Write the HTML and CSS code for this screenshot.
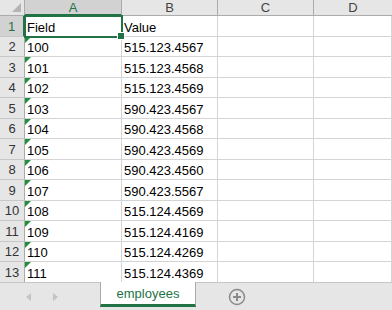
FILE: index.html
```html
<!DOCTYPE html>
<html lang="en">

<head>
    <meta charset="UTF-8">
    <title>employees</title>
    <link rel="stylesheet" href="styles.css">
</head>

<body>
    <div class="sheet">
        <div class="grid">
            <div class="corner"></div>
            <div class="col-head active">A</div>
            <div class="col-head">B</div>
            <div class="col-head">C</div>
            <div class="col-head last">D</div>

            <div class="row-head active">1</div>
            <div class="cell selected">Field</div>
            <div class="cell">Value</div>
            <div class="cell"></div>
            <div class="cell"></div>

            <div class="row-head">2</div>
            <div class="cell txt">100</div>
            <div class="cell">515.123.4567</div>
            <div class="cell"></div>
            <div class="cell"></div>

            <div class="row-head">3</div>
            <div class="cell txt">101</div>
            <div class="cell">515.123.4568</div>
            <div class="cell"></div>
            <div class="cell"></div>

            <div class="row-head">4</div>
            <div class="cell txt">102</div>
            <div class="cell">515.123.4569</div>
            <div class="cell"></div>
            <div class="cell"></div>

            <div class="row-head">5</div>
            <div class="cell txt">103</div>
            <div class="cell">590.423.4567</div>
            <div class="cell"></div>
            <div class="cell"></div>

            <div class="row-head">6</div>
            <div class="cell txt">104</div>
            <div class="cell">590.423.4568</div>
            <div class="cell"></div>
            <div class="cell"></div>

            <div class="row-head">7</div>
            <div class="cell txt">105</div>
            <div class="cell">590.423.4569</div>
            <div class="cell"></div>
            <div class="cell"></div>

            <div class="row-head">8</div>
            <div class="cell txt">106</div>
            <div class="cell">590.423.4560</div>
            <div class="cell"></div>
            <div class="cell"></div>

            <div class="row-head">9</div>
            <div class="cell txt">107</div>
            <div class="cell">590.423.5567</div>
            <div class="cell"></div>
            <div class="cell"></div>

            <div class="row-head">10</div>
            <div class="cell txt">108</div>
            <div class="cell">515.124.4569</div>
            <div class="cell"></div>
            <div class="cell"></div>

            <div class="row-head">11</div>
            <div class="cell txt">109</div>
            <div class="cell">515.124.4169</div>
            <div class="cell"></div>
            <div class="cell"></div>

            <div class="row-head">12</div>
            <div class="cell txt">110</div>
            <div class="cell">515.124.4269</div>
            <div class="cell"></div>
            <div class="cell"></div>

            <div class="row-head">13</div>
            <div class="cell txt">111</div>
            <div class="cell">515.124.4369</div>
            <div class="cell"></div>
            <div class="cell"></div>

            <!-- row 14, only its top edge shows above the tab bar -->
            <div class="row-head"></div>
            <div class="cell txt"></div>
            <div class="cell"></div>
            <div class="cell"></div>
            <div class="cell"></div>
        </div>

        <div class="tabs">
            <div class="nav">
                <span class="arrow left"></span>
                <span class="arrow right"></span>
            </div>
            <div class="tab">employees</div>
            <div class="add">
                <svg width="18" height="18" viewBox="0 0 18 18">
                    <circle cx="9" cy="9" r="7.5" fill="none" stroke="#8a8a8a" stroke-width="1.5" />
                    <path d="M9 5v8M5 9h8" stroke="#8a8a8a" stroke-width="2" />
                </svg>
            </div>
        </div>
    </div>
</body>

</html>
```

FILE: styles.css
```css
:root {
    --green: #217346;
    --grid: #d4d4d4;
    --head-bg: #e6e6e6;
    --head-line: #ababab;
}

* {
    margin: 0;
    padding: 0;
    box-sizing: border-box;
}

body {
    background: #fff;
    font-family: 'Liberation Sans', Arial, sans-serif;
    font-size: 13px;
    color: #000;
}

.sheet {
    width: 392px;
    height: 310px;
    display: flex;
    flex-direction: column;
    overflow: hidden;
}

.grid {
    display: grid;
    grid-template-columns: 25px 97px 96px 96px 1fr;
    grid-template-rows: 16px repeat(14, 20.5px);
    flex: 1;
    overflow: hidden;
}

.corner {
    background: var(--head-bg);
    border-right: 1px solid var(--head-line);
    border-bottom: 1px solid var(--head-line);
    position: relative;
}

.corner::after {
    content: '';
    position: absolute;
    right: 3px;
    bottom: 3px;
    border-left: 9px solid transparent;
    border-bottom: 9px solid #b4b4b4;
}

.col-head {
    background: var(--head-bg);
    border-right: 1px solid var(--head-line);
    border-bottom: 1px solid var(--head-line);
    color: #444;
    display: flex;
    align-items: center;
    justify-content: center;
}

.col-head.last {
    border-right: none;
}

.row-head {
    background: var(--head-bg);
    border-right: 1px solid var(--head-line);
    border-bottom: 1px solid #c8c8c8;
    color: #333;
    display: flex;
    align-items: center;
    justify-content: center;
    padding-top: 1px;
}

.col-head.active,
.row-head.active {
    background: #d2d2d2;
    color: var(--green);
}

.col-head.active {
    border-bottom: 2px solid var(--green);
}

.row-head.active {
    border-right: 2px solid var(--green);
}

.cell {
    border-right: 1px solid var(--grid);
    border-bottom: 1px solid var(--grid);
    padding: 3px 2px 0;
    display: flex;
    align-items: center;
    white-space: nowrap;
    position: relative;
}

/* number stored as text marker */
.cell.txt::before {
    content: '';
    position: absolute;
    left: 0;
    top: 0;
    border-top: 6px solid #1f8f3a;
    border-right: 6px solid transparent;
}

.cell.selected {
    outline: 2px solid var(--green);
    outline-offset: -1px;
    z-index: 1;
}

.cell.selected::after {
    content: '';
    position: absolute;
    right: -4px;
    bottom: -4px;
    width: 6px;
    height: 6px;
    background: var(--green);
    border: 1px solid #fff;
}

.tabs {
    height: 28px;
    background: var(--head-bg);
    border-top: 1px solid #c6c6c6;
    display: flex;
    flex-shrink: 0;
}

.nav {
    width: 100px;
    display: flex;
    align-items: center;
    gap: 22px;
    padding-left: 26px;
}

.arrow {
    width: 0;
    height: 0;
    border-top: 4px solid transparent;
    border-bottom: 4px solid transparent;
}

.arrow.left {
    border-right: 5px solid #c3c3c3;
}

.arrow.right {
    border-left: 5px solid #c3c3c3;
}

.tab {
    width: 96px;
    margin-top: -1px;
    background: #fff;
    border-left: 1px solid #ababab;
    border-right: 1px solid #ababab;
    border-bottom: 3px solid var(--green);
    color: var(--green);
    display: flex;
    align-items: center;
    justify-content: center;
    padding-top: 1px;
    height: 25px;
}

.add {
    display: flex;
    align-items: center;
    padding-left: 32px;
    padding-top: 1px;
}
```
